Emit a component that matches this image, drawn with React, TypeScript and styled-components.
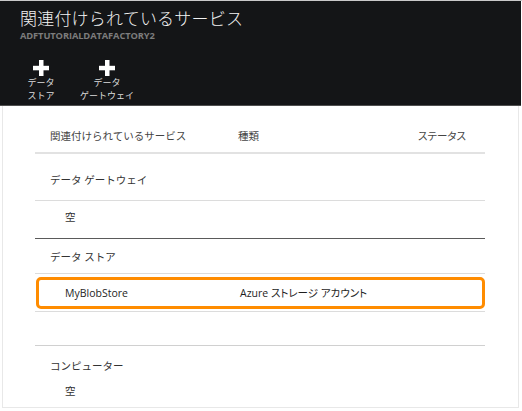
import React from 'react'
import styled, { createGlobalStyle } from 'styled-components'

const GlobalStyle = createGlobalStyle`
  html, body {
    margin: 0;
    padding: 0;
    background: #fff;
  }
  body {
    font-family: "Open Sans", "Noto Sans CJK JP", sans-serif;
  }
`

const headerButtons = [
  { id: 'store', lines: ['データ', 'ストア'] },
  { id: 'gateway', lines: ['データ', 'ゲートウェイ'] }
]

const PlusIcon = () => (
  <svg width={16} height={16} viewBox="0 0 16 16">
    <rect x={6} y={0} width={4.5} height={16} fill="#fff" />
    <rect x={0} y={5.8} width={16} height={4.5} fill="#fff" />
  </svg>
)

export default function App() {
  return (
    <>
      <GlobalStyle />
      <Frame>
        <Header>
          <Title>関連付けられているサービス</Title>
          <Subtitle>ADFTUTORIALDATAFACTORY2</Subtitle>
          <ButtonRow>
            {headerButtons.map(b => (
              <HeaderButton key={b.id}>
                <PlusIcon />
                <ButtonLabel>
                  {b.lines.map(l => (
                    <span key={l}>{l}</span>
                  ))}
                </ButtonLabel>
              </HeaderButton>
            ))}
          </ButtonRow>
        </Header>
        <Panel>
          <HeadRow>
            <Cell $width={188}>関連付けられているサービス</Cell>
            <Cell $width={180}>種類</Cell>
            <Cell $narrow>ステータス</Cell>
          </HeadRow>
          <SectionRow $top={18} $bottom={12}>データ ゲートウェイ</SectionRow>
          <EmptyRow $top={8} $bottom={13} $strong>
            空
          </EmptyRow>
          <SectionRow $top={10} $bottom={8}>データ ストア</SectionRow>
          <HighlightRow>
            <Cell $width={175}>MyBlobStore</Cell>
            <Cell $narrow>Azure ストレージ アカウント</Cell>
          </HighlightRow>
          <Spacer />
          <SectionRow $top={12} $bottom={0} $plain>
            コンピューター
          </SectionRow>
          <EmptyRow $top={9} $bottom={0} $plain>
            空
          </EmptyRow>
        </Panel>
      </Frame>
    </>
  )
}

const Frame = styled.div`
  width: 522px;
  height: 411px;
  border-top: 1px solid #c9c9c9;
  box-sizing: border-box;
`

const Header = styled.header`
  height: 105px;
  margin-right: 1px;
  padding: 7px 20px 0;
  box-sizing: border-box;
  background: #141517;
  border-bottom: 1px solid #4f4f4f;
  color: #fff;
`

const Title = styled.h1`
  margin: 0;
  font-size: 17px;
  line-height: 22px;
  font-weight: 300;
  letter-spacing: 0.2px;
  color: #f2f2f2;
`

const Subtitle = styled.div`
  font-size: 9.3px;
  line-height: 12px;
  font-weight: 700;
  color: #7c7c7c;
  letter-spacing: -0.1px;
`

const ButtonRow = styled.div`
  display: flex;
  gap: 24px;
  margin-top: 18px;
`

const HeaderButton = styled.div`
  width: 42px;
  display: flex;
  flex-direction: column;
  align-items: center;
`

const ButtonLabel = styled.div`
  display: flex;
  flex-direction: column;
  align-items: center;
  white-space: nowrap;
  font-size: 9px;
  line-height: 13px;
  color: #dcdcdc;
`

const Panel = styled.div`
  height: 302px;
  margin: 0 3px 0 2px;
  padding: 22px 33px 0 32px;
  box-sizing: border-box;
  border: 1px solid #e8e8e8;
  border-top: none;
  font-size: 10.5px;
  line-height: 16px;
  color: #333;
`

const HeadRow = styled.div`
  display: flex;
  padding: 0 0 8px 15px;
  border-bottom: 2px solid #e2e2e2;
  color: #444;
`

const Cell = styled.div<{ $width?: number; $narrow?: boolean }>`
  flex: ${p => (p.$width ? `0 0 ${p.$width}px` : '1')};
  white-space: nowrap;
  font-feature-settings: ${p => (p.$narrow ? '"palt"' : 'normal')};
`

const SectionRow = styled.div<{ $top: number; $bottom: number; $plain?: boolean }>`
  padding: ${p => p.$top}px 0 ${p => p.$bottom}px 15px;
  border-bottom: ${p => (p.$plain ? 'none' : '1px solid #dcdcdc')};
`

const EmptyRow = styled.div<{ $top: number; $bottom: number; $strong?: boolean; $plain?: boolean }>`
  padding: ${p => p.$top}px 0 ${p => p.$bottom}px 30px;
  border-bottom: ${p => (p.$plain ? 'none' : p.$strong ? '1px solid #5a5a5a' : '1px solid #dcdcdc')};
`

const HighlightRow = styled.div`
  display: flex;
  align-items: center;
  height: 32px;
  margin: 3px 0 2px 1px;
  padding-left: 26px;
  box-sizing: border-box;
  border: 3px solid #ff8c00;
  border-radius: 5px;
  color: #1e1e1e;
`

const Spacer = styled.div`
  height: 33px;
  border-top: 1px solid #dcdcdc;
  border-bottom: 1px solid #d0d0d0;
`
